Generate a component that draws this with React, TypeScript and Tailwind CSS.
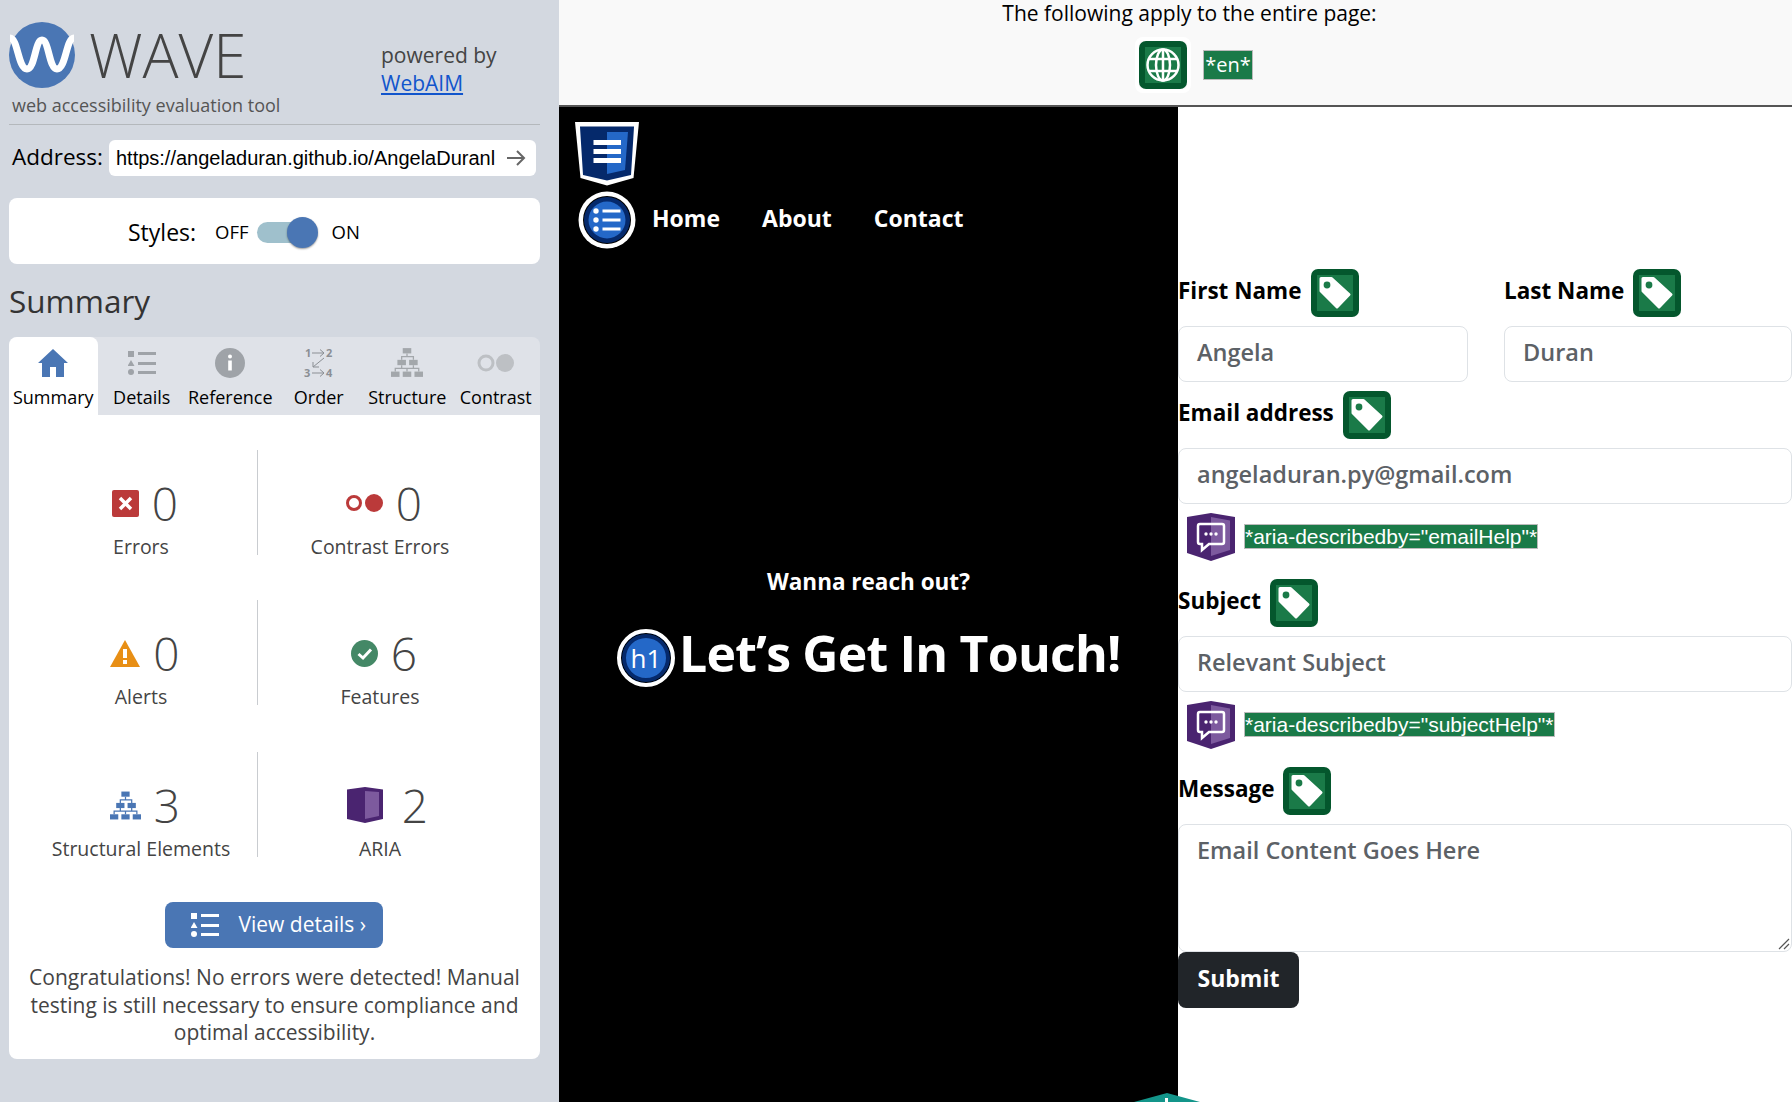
const sans = 'font-["Open_Sans",sans-serif]'

const TagIcon = () => (
  <svg width="48" height="48" viewBox="0 0 48 48" className="shrink-0">
    <rect width="48" height="48" rx="7" fill="#04572d" />
    <rect x="6" y="6" width="36" height="36" fill="#1a7a48" />
    <path d="M10 9.500H20.500L38 25.500L26 38L10 22Z" fill="#fff" stroke="#fff" strokeWidth="3" strokeLinejoin="round" />
    <circle cx="16" cy="16" r="3.400" fill="#1a7a48" />
  </svg>
)

const AriaIcon = () => (
  <svg width="48" height="48" viewBox="0 0 48 48" className="shrink-0">
    <path d="M0 4 L24 0 L48 4 L48 40 L24 48 L0 40 Z" fill="#4a2470" />
    <path d="M24 4 L43 7.500 L43 37 L24 43 Z" fill="#7d5a9e" />
    <path d="M13 11h22a2 2 0 0 1 2 2v16a2 2 0 0 1-2 2H22l-7 6v-6h-2a2 2 0 0 1-2-2V13a2 2 0 0 1 2-2z" fill="none" stroke="#fff" strokeWidth="2.500" />
    <circle cx="19" cy="21" r="1.700" fill="#fff" />
    <circle cx="24" cy="21" r="1.700" fill="#fff" />
    <circle cx="29" cy="21" r="1.700" fill="#fff" />
  </svg>
)

const ListGlyph = ({ color }: { color: string }) => (
  <>
    <rect x="0" y="0" width="6" height="6" fill={color} />
    <path d="M3 9 L6.500 15 H-0.500 Z" fill={color} />
    <circle cx="3" cy="21" r="3" fill={color} />
    <rect x="10" y="1" width="18" height="3" fill={color} />
    <rect x="10" y="11" width="18" height="3" fill={color} />
    <rect x="10" y="20" width="18" height="3" fill={color} />
  </>
)

const TreeGlyph = ({ color }: { color: string }) => (
  <>
    <rect x="11" y="0" width="8" height="5" fill={color} />
    <rect x="6" y="11" width="8" height="5" fill={color} />
    <rect x="17" y="11" width="8" height="5" fill={color} />
    <rect x="0" y="22" width="8" height="5" fill={color} />
    <rect x="11" y="22" width="8" height="5" fill={color} />
    <rect x="22" y="22" width="8" height="5" fill={color} />
    <path d="M15 5v3M10 11V8h11v3M10 16v3M21 16v3M4 22v-3h22v3M15 19v3" stroke={color} strokeWidth="1.200" fill="none" />
  </>
)

const tabs = [
  {
    label: 'Summary',
    icon: (
      <svg width="30" height="28" viewBox="0 0 30 28">
        <path d="M15 0 L30 14 H26 V28 H18 V18 H12 V28 H4 V14 H0 Z" fill="#4a76b4" />
      </svg>
    ),
  },
  {
    label: 'Details',
    icon: (
      <svg width="28" height="24" viewBox="0 0 28 24">
        <ListGlyph color="#9fa3a8" />
      </svg>
    ),
  },
  {
    label: 'Reference',
    icon: (
      <svg width="30" height="30" viewBox="0 0 30 30">
        <circle cx="15" cy="15" r="15" fill="#9fa3a8" />
        <circle cx="15" cy="8.500" r="2" fill="#fff" />
        <rect x="13.200" y="12.500" width="3.600" height="10" fill="#fff" />
      </svg>
    ),
  },
  {
    label: 'Order',
    icon: (
      <svg width="30" height="32" viewBox="0 0 30 32" className="overflow-visible">
        <text x="1" y="10" fontSize="11" fontWeight="700" fill="#8b8f94" fontFamily="Open Sans">1</text>
        <text x="22" y="10" fontSize="11" fontWeight="700" fill="#8b8f94" fontFamily="Open Sans">2</text>
        <text x="0" y="30" fontSize="11" fontWeight="700" fill="#8b8f94" fontFamily="Open Sans">3</text>
        <text x="22" y="30" fontSize="11" fontWeight="700" fill="#8b8f94" fontFamily="Open Sans">4</text>
        <path d="M8 6h12M16 2.500L20 6l-4 3.500M8 26h12M16 22.500L20 26l-4 3.500M20 11L9 20M9 15v5h6" stroke="#8b8f94" strokeWidth="1" fill="none" />
      </svg>
    ),
  },
  {
    label: 'Structure',
    icon: (
      <svg width="32" height="29" viewBox="0 0 30 27">
        <TreeGlyph color="#a3a7ab" />
      </svg>
    ),
  },
  {
    label: 'Contrast',
    icon: (
      <svg width="38" height="20" viewBox="0 0 38 20">
        <circle cx="9" cy="10" r="7" fill="none" stroke="#bdc0c4" strokeWidth="3" />
        <circle cx="28" cy="10" r="9" fill="#bdc0c4" />
      </svg>
    ),
  },
]

const Stat = ({ icon, value, label, divider }: { icon: React.ReactNode; value: string; label: string; divider?: boolean }) => (
  <div className={`flex h-[105px] flex-col items-center pt-[28px] ${divider ? 'border-r border-[#c9ccd0]' : ''}`}>
    <div className="ml-[8px] flex h-[50px] items-center gap-[13px]">
      {icon}
      <span className="text-[46px] leading-[50px] font-light text-[#444]">{value}</span>
    </div>
    <span className="mt-[5px] text-[19.500px] leading-[28px] whitespace-nowrap text-[#444]">{label}</span>
  </div>
)

const Sidebar = () => (
  <aside className={`flex h-full w-[559px] shrink-0 flex-col bg-[#d3d8e0] pr-[19px] pl-[9px] ${sans}`}>
    <div className="flex h-[125px] border-b border-[#b4b8bc] pt-[22px]">
      <div className="w-[372px] shrink-0">
        <div className="flex items-center">
          <svg width="66" height="66" viewBox="0 0 66 66" className="shrink-0">
            <circle cx="33" cy="33" r="33" fill="#4a76b4" />
            <path d="M1 16 C9 16 9 47 18 47 C26 47 26 18 33 18 C40 18 40 47 48 47 C57 47 57 16 65 16" fill="none" stroke="#fff" strokeWidth="7" />
          </svg>
          <span className="ml-[14px] text-[60px] leading-[66px] font-light text-[#444]">WAVE</span>
        </div>
        <p className="mt-[5px] pl-[3px] text-[18px] leading-[24px] whitespace-nowrap text-[#555]">web accessibility evaluation tool</p>
      </div>
      <div className="pt-[19px] text-[21px] leading-[28px] text-[#444]">
        <p>powered by</p>
        <a className="text-[#1155cc] underline" href="#">WebAIM</a>
      </div>
    </div>

    <div className="mt-[15px] flex items-center pl-[3px]">
      <span className="pb-[2px] text-[22.500px] text-black">Address:</span>
      <div className="ml-[6px] flex h-[36px] w-[427px] items-center rounded-[6px] bg-white pl-[7px] font-['Liberation_Sans',sans-serif] text-[20px] text-black">
        <span className="w-[382px] pb-[1px] whitespace-nowrap">https://angeladuran.github.io/AngelaDuranl</span>
        <svg width="20" height="18" viewBox="0 0 20 18" className="ml-[8px]">
          <path d="M1 9h17M11 2l7 7-7 7" fill="none" stroke="#666" strokeWidth="2" />
        </svg>
      </div>
    </div>

    <div className="mt-[22px] flex h-[66px] items-center rounded-[8px] bg-white pt-[2px] pl-[119px] text-black">
      <span className="text-[23px]">Styles:</span>
      <span className="ml-[19px] text-[18.500px]">OFF</span>
      <div className="relative ml-[8px] h-[21px] w-[45px] rounded-full bg-[#9fc0cc]">
        <span className="absolute top-[-5px] left-[30px] h-[31px] w-[31px] rounded-full bg-[#4a76b4] shadow-[0_1px_2px_rgba(0,0,0,0.4)]" />
      </div>
      <span className="ml-[30px] text-[18.500px]">ON</span>
    </div>

    <h2 className="mt-[17px] text-[31.500px] leading-[40px] text-[#333]">Summary</h2>

    <div className="mt-[16px] grid h-[78px] grid-cols-6 rounded-t-[8px] bg-[#dfe2e8] text-black">
      {tabs.map((t, i) => (
        <div key={t.label} className={`flex flex-col items-center rounded-t-[8px] pt-[9px] ${i === 0 ? 'bg-white' : ''}`}>
          <div className="flex h-[33px] items-center">{t.icon}</div>
          <span className="mt-[6px] text-[18px] leading-[24px] whitespace-nowrap">{t.label}</span>
        </div>
      ))}
    </div>

    <div className="flex h-[644px] flex-col rounded-b-[8px] bg-white pt-[35px]">
      <div className="grid grid-cols-[233px_244px] grid-rows-[150px_152px_105px] pl-[16px]">
        <Stat
          divider
          value="0"
          label="Errors"
          icon={
            <svg width="27" height="27" viewBox="0 0 27 27">
              <rect width="27" height="27" rx="2" fill="#bb3a3a" />
              <path d="M8 8l11 11M19 8L8 19" stroke="#fff" strokeWidth="3.500" />
            </svg>
          }
        />
        <Stat
          value="0"
          label="Contrast Errors"
          icon={
            <svg width="37" height="20" viewBox="0 0 37 20">
              <circle cx="8" cy="10" r="6.500" fill="none" stroke="#bb3a3a" strokeWidth="3" />
              <circle cx="28" cy="10" r="9" fill="#bb3a3a" />
            </svg>
          }
        />
        <Stat
          divider
          value="0"
          label="Alerts"
          icon={
            <svg width="30" height="27" viewBox="0 0 30 27">
              <path d="M15 0 L30 27 H0 Z" fill="#e88f15" />
              <rect x="13" y="9" width="4" height="9" fill="#fff" />
              <rect x="13" y="20" width="4" height="4" fill="#fff" />
            </svg>
          }
        />
        <Stat
          value="6"
          label="Features"
          icon={
            <svg width="27" height="27" viewBox="0 0 27 27">
              <circle cx="13.500" cy="13.500" r="13.500" fill="#448866" />
              <path d="M7.500 14l4.500 4 8-8.500" fill="none" stroke="#fff" strokeWidth="3" />
            </svg>
          }
        />
        <Stat
          divider
          value="3"
          label="Structural Elements"
          icon={
            <svg width="31" height="29" viewBox="0 0 30 27">
              <TreeGlyph color="#4a76b4" />
            </svg>
          }
        />
        <Stat
          value="2"
          label="ARIA"
          icon={
            <svg width="36" height="36" viewBox="0 0 36 36" className="mr-[6px] ml-[7px]">
              <path d="M0 2.500 L18 0 L36 2.500 V32 L18 36 L0 32 Z" fill="#4a2470" />
              <path d="M18 4 L32 5 V29 L18 32 Z" fill="#7d5a9e" />
            </svg>
          }
        />
      </div>

      <div className="mt-[45px] mr-[2px] flex h-[46px] w-[218px] items-center self-center rounded-[8px] bg-[#4a76b4] pl-[26px] text-[21px] text-white">
        <svg width="28" height="24" viewBox="0 0 28 24">
          <ListGlyph color="#fff" />
        </svg>
        <span className="ml-[20px] whitespace-nowrap">View details ›</span>
      </div>

      <p className="mt-[16px] px-[8px] text-center text-[21px] leading-[27.500px] text-[#444]">
        Congratulations! No errors were detected! Manual testing is still necessary to ensure compliance and optimal accessibility.
      </p>
    </div>
  </aside>
)

const TopBar = () => (
  <div className={`flex h-[107px] shrink-0 flex-col items-center border-b-2 border-[#555] bg-[#f9f9f9] pl-[28px] ${sans}`}>
    <p className="text-[21px] leading-[27px] text-black">The following apply to the entire page:</p>
    <div className="mt-[10px] ml-[9px] flex items-center gap-[12px]">
      <span className="rounded-[8px] border-4 border-white">
        <svg width="48" height="48" viewBox="0 0 48 48" className="block">
          <rect width="48" height="48" rx="7" fill="#04572d" />
          <rect x="6" y="6" width="36" height="36" fill="#1a7a48" />
          <g fill="none" stroke="#fff" strokeWidth="2.500">
            <circle cx="24" cy="24" r="15.500" />
            <ellipse cx="24" cy="24" rx="7" ry="15.500" />
            <path d="M10 18h28M10 30h28M24 8v32" />
          </g>
        </svg>
      </span>
      <span className="border border-[#bbb] bg-[#1a7a48] px-[1px] text-[20px] leading-[28px] text-white">*en*</span>
    </div>
  </div>
)

const Field = ({ label }: { label: string }) => (
  <div className="mb-[9px] flex h-[48px] items-center gap-[9px]">
    <span className="pb-[4px] text-[22.500px] font-bold whitespace-nowrap text-black">{label}</span>
    <TagIcon />
  </div>
)

const inputCls =
  'flex h-[56px] items-center rounded-[8px] border border-[#dee2e6] bg-white pb-[2px] pl-[18px] text-[23.500px] font-semibold whitespace-nowrap text-[#5c6166]'

const Described = ({ text }: { text: string }) => (
  <div className="mt-[9px] flex h-[48px] items-center gap-[9px] pl-[9px]">
    <AriaIcon />
    <span className="mb-[2px] border border-[#bbb] bg-[#1a7a48] font-['Liberation_Sans',sans-serif] text-[21px] leading-[23px] whitespace-nowrap text-white">{text}</span>
  </div>
)

const ContactForm = () => (
  <div className={`flex min-w-0 flex-1 flex-col bg-white pt-[162px] ${sans}`}>
    <div className="grid grid-cols-[290px_288px] gap-x-[36px]">
      <div>
        <Field label="First Name" />
        <div className={inputCls}>Angela</div>
      </div>
      <div>
        <Field label="Last Name" />
        <div className={inputCls}>Duran</div>
      </div>
    </div>

    <div className="mt-[9px]">
      <Field label="Email address" />
      <div className={inputCls}>angeladuran.py@gmail.com</div>
      <Described text='*aria-describedby="emailHelp"*' />
    </div>

    <div className="mt-[18px]">
      <Field label="Subject" />
      <div className={inputCls}>Relevant Subject</div>
      <Described text='*aria-describedby="subjectHelp"*' />
    </div>

    <div className="mt-[18px]">
      <Field label="Message" />
      <div className={`${inputCls} relative h-[128px] items-start pt-[8px]`}>
        Email Content Goes Here
        <svg width="12" height="12" viewBox="0 0 12 12" className="absolute right-[1px] bottom-[1px]">
          <path d="M1 11L11 1M6 11l5-5" stroke="#555" strokeWidth="1.200" />
        </svg>
      </div>
    </div>

    <div className="flex h-[56px] w-[121px] items-center justify-center rounded-[8px] bg-[#212529] pb-[4px] text-[23px] font-bold text-white">Submit</div>
  </div>
)

const Hero = () => (
  <div className={`relative flex w-[619px] shrink-0 flex-col bg-black pl-[16px] ${sans}`}>
    <svg width="64" height="64" viewBox="0 0 64 64" className="mt-[15px] shrink-0">
      <path d="M0 0 H64 L58.500 56 L32 63.500 L5.500 56 Z" fill="#fff" />
      <path d="M5 4.500 H59 L56 53 L32 58.500 L8 53 Z" fill="#05296b" />
      <path d="M32 10 H53 L50 48 L32 52 Z" fill="#2468c8" />
      <rect x="18.500" y="18" width="27.500" height="5" fill="#fff" />
      <rect x="18.500" y="27" width="27.500" height="5" fill="#fff" />
      <rect x="18.500" y="36" width="27.500" height="5" fill="#fff" />
    </svg>

    <div className="mt-[5px] flex items-center pl-[3px]">
      <svg width="58" height="58" viewBox="0 0 58 58" className="shrink-0">
        <circle cx="29" cy="29" r="28.500" fill="#fff" />
        <circle cx="29" cy="29" r="24" fill="#000" />
        <circle cx="29" cy="29" r="23" fill="#05296b" />
        <circle cx="29" cy="29" r="18.500" fill="#2468c8" />
        <circle cx="18" cy="20" r="2.700" fill="#fff" />
        <circle cx="18" cy="29" r="2.700" fill="#fff" />
        <circle cx="18" cy="38" r="2.700" fill="#fff" />
        <rect x="24.500" y="18.500" width="18" height="3" fill="#fff" />
        <rect x="24.500" y="27.500" width="18" height="3" fill="#fff" />
        <rect x="24.500" y="36.500" width="18" height="3" fill="#fff" />
      </svg>
      <nav className="ml-[16px] flex gap-[42px] pb-[4px] text-[23px] font-bold text-white">
        <span>Home</span>
        <span>About</span>
        <span>Contact</span>
      </nav>
    </div>

    <p className="mt-[318px] pl-[192px] text-[22.500px] leading-[30px] font-bold whitespace-nowrap text-white">Wanna reach out?</p>
    <div className="mt-[32px] flex items-start pl-[42px]">
      <span className="flex h-[58px] w-[58px] shrink-0 items-center justify-center rounded-full border-[4px] border-white bg-[#2468c8] text-[26px] text-white shadow-[inset_0_0_0_1px_#000,inset_0_0_0_5px_#05296b]">h1</span>
      <h1 className="mt-[-5px] ml-[4px] text-[50px] leading-[58px] font-bold tracking-[-0.8px] whitespace-nowrap text-white">Let’s Get In Touch!</h1>
    </div>

    <svg width="66" height="9" viewBox="0 0 66 9" className="absolute right-[-22px] bottom-0">
      <path d="M0 9 L33 0 L66 9 Z" fill="#13958a" />
      <rect x="31" y="5" width="3" height="4" fill="#fff" />
    </svg>
  </div>
)

export default function App() {
  return (
    <div className="flex h-[1102px] w-[1792px] overflow-hidden">
      <Sidebar />
      <main className="flex min-w-0 flex-1 flex-col">
        <TopBar />
        <div className="flex min-h-0 flex-1">
          <Hero />
          <ContactForm />
        </div>
      </main>
    </div>
  )
}
